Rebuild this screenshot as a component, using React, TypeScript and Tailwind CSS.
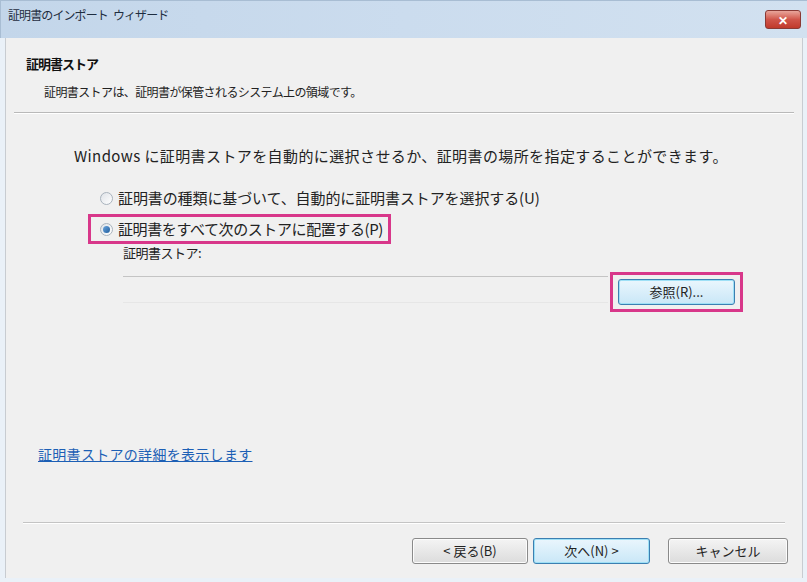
import React from "react";

const jp = { fontFamily: '"Noto Sans CJK JP", "Noto Sans", sans-serif' };

function Radio({ checked }: { checked?: boolean }) {
  return (
    <span className="w-[13px] h-[13px] rounded-full border border-[#a9b3bd] bg-gradient-to-br from-[#dfe3e8] to-white flex items-center justify-center shrink-0">
      {checked && <span className="w-[7px] h-[7px] rounded-full bg-gradient-to-br from-[#6aa5dd] to-[#1f5e9e]" />}
    </span>
  );
}

function WinButton({ children, focused, className = "" }: { children: React.ReactNode; focused?: boolean; className?: string }) {
  return (
    <button
      className={
        "h-[26px] rounded-[3px] border text-[13px] text-[#222] flex items-center justify-center " +
        (focused
          ? "border-[#3c7fb1] bg-gradient-to-b from-[#eaf6fd] to-[#c9e7f7] shadow-[inset_0_0_0_1px_#9ee0f6] "
          : "border-[#8a8a8a] bg-gradient-to-b from-[#f4f4f4] to-[#dcdcdc] shadow-[inset_0_0_0_1px_#fcfcfc] ") +
        className
      }
    >
      {children}
    </button>
  );
}

export default function App() {
  return (
    <div className="w-[807px] h-[582px] bg-[#eaf1f8] flex flex-col overflow-hidden" style={jp}>
      {/* title bar */}
      <div className="h-[38px] shrink-0 bg-gradient-to-r from-[#c3d6ea] via-[#cbdcee] to-[#d2e1f0] border-t border-l border-[#a8bdd3] flex items-start justify-between pl-[7px] pr-[6px] pt-[5px]">
        <span className="text-[12px] text-[#1e2d40] tracking-[-0.9px] flex gap-[5px]">
          <span>証明書のインポート</span>
          <span>ウィザード</span>
        </span>
        <span className="mt-[4px] w-[36px] h-[19px] rounded-[3px] border border-[#8a3a35] bg-gradient-to-b from-[#e8a59b] via-[#d0554a] to-[#c0392b] flex items-center justify-center text-white text-[12px] font-bold leading-none">
          ✕
        </span>
      </div>

      {/* client area */}
      <div className="flex-1 ml-[5px] mr-[4px] mb-[4px] bg-[#f0f0f0] border-l border-r border-[#c8ccd1] flex flex-col">
        {/* header */}
        <div className="pl-[20px] pt-[16px]">
          <div className="text-[13px] font-bold text-[#111] leading-[20px] tracking-[-1px]">証明書ストア</div>
          <div className="pl-[18px] mt-[9px] text-[12px] text-[#222] leading-[18px] tracking-[-0.6px]">
            証明書ストアは、証明書が保管されるシステム上の領域です。
          </div>
        </div>
        <div className="mx-[8px] mt-[11px] h-px bg-[#b9b9b9] border-b border-white box-content" />

        {/* body */}
        <div className="pl-[68px] pt-[32px] pr-[30px] text-[#222]">
          <div className="text-[15px] leading-[20px] tracking-[0.4px] whitespace-nowrap">
            Windows に証明書ストアを自動的に選択させるか、証明書の場所を指定することができます。
          </div>

          <div className="mt-[22px] pl-[26px] flex items-center gap-[5px] text-[15px] leading-[20px] tracking-[-0.1px]">
            <Radio />
            <span>証明書の種類に基づいて、自動的に証明書ストアを選択する(U)</span>
          </div>

          <div className="mt-[6px] ml-[14px] w-[303px] h-[30px] border-[3px] border-[#d8378a] flex items-center gap-[5px] pl-[9px] text-[15px] tracking-[-0.4px]">
            <Radio checked />
            <span>証明書をすべて次のストアに配置する(P)</span>
          </div>

          <div className="pl-[49px] mt-[-1px]">
            <div className="text-[13px] leading-[20px] tracking-[-0.5px]">証明書ストア:</div>
            <div className="flex items-start">
              <div className="w-[485px] h-[27px] mt-[13px] border-t border-[#c4c4c4] border-b border-b-[#e6e6e6]" />
              <div className="ml-[2px] mt-[9px] w-[133px] h-[40px] border-[3px] border-[#d8378a] flex items-center justify-center">
                <WinButton focused className="w-[117px] h-[24px]">参照(R)...</WinButton>
              </div>
            </div>
          </div>
        </div>

        {/* link */}
        <div className="pl-[32px] mt-[129px]">
          <span className="text-[14px] text-[#1c5fb5] underline tracking-[0.3px]">証明書ストアの詳細を表示します</span>
        </div>

        <div className="flex-1" />
        <div className="mx-[17px] h-px bg-[#c4c4c4] border-b border-white box-content" />

        {/* footer buttons */}
        <div className="h-[54px] flex items-center justify-end pr-[14px]">
          <WinButton className="w-[116px]">&lt; 戻る(B)</WinButton>
          <WinButton focused className="w-[117px] ml-[5px]">次へ(N) &gt;</WinButton>
          <WinButton className="w-[120px] ml-[18px]">キャンセル</WinButton>
        </div>
      </div>
    </div>
  );
}
